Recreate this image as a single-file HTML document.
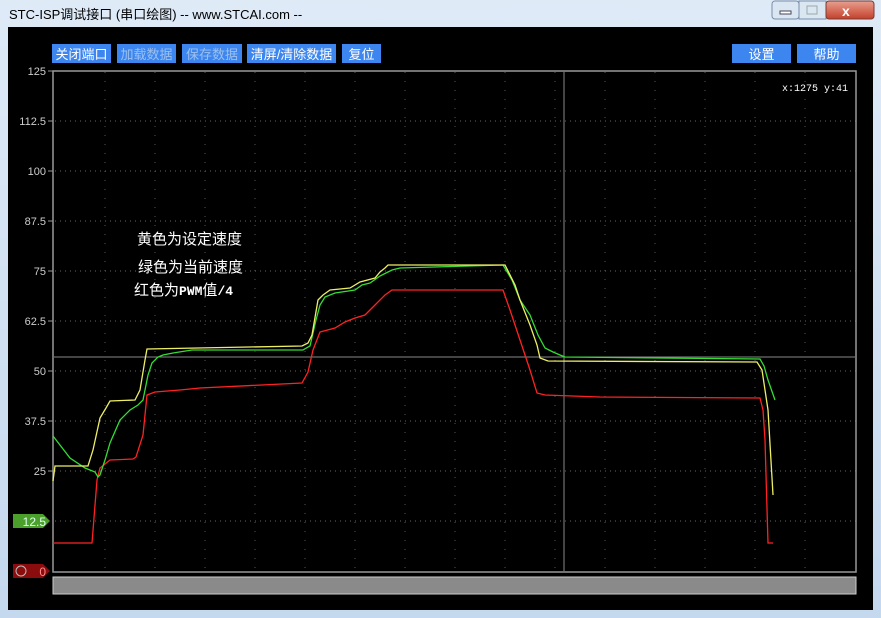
<!DOCTYPE html>
<html><head><meta charset="utf-8"><style>
body{margin:0;width:881px;height:618px;overflow:hidden;background:#c9dcf0;font-family:"Liberation Sans","Noto Sans CJK SC",sans-serif}
</style></head><body>
<svg width="881" height="618" xmlns="http://www.w3.org/2000/svg" style="position:absolute;left:0;top:0">
<defs><linearGradient id="tb" x1="0" y1="0" x2="0" y2="1"><stop offset="0" stop-color="#dfeaf7"/><stop offset="1" stop-color="#c4d8ee"/></linearGradient>
<linearGradient id="cl" x1="0" y1="0" x2="0" y2="1"><stop offset="0" stop-color="#e8a090"/><stop offset="1" stop-color="#c4402a"/></linearGradient></defs>
<rect width="881" height="618" fill="url(#tb)"/>
<text x="9" y="19" font-size="13" fill="#000" font-family="Liberation Sans,Noto Sans CJK SC,sans-serif">STC-ISP调试接口 (串口绘图) -- www.STCAI.com --</text>
<rect x="772" y="1" width="27" height="18" rx="3" fill="#dbe6f3" stroke="#7a8ea8"/>
<rect x="780" y="11" width="11" height="3" fill="#fff" stroke="#445"/>
<rect x="799" y="1" width="27" height="18" fill="#dbe6f3" stroke="#7a8ea8"/>
<rect x="807" y="6" width="10" height="8" fill="none" stroke="#9aa"/>
<rect x="826" y="1" width="48" height="18" rx="3" fill="url(#cl)" stroke="#7a3a30"/>
<text x="842" y="16" font-size="14" font-weight="bold" fill="#fff">x</text>
<rect x="8" y="27" width="865" height="583" fill="#000"/>
<g stroke="#666" stroke-dasharray="1,4">
<line x1="55" y1="121" x2="856" y2="121"/><line x1="55" y1="171" x2="856" y2="171"/><line x1="55" y1="221" x2="856" y2="221"/><line x1="55" y1="271" x2="856" y2="271"/><line x1="55" y1="321" x2="856" y2="321"/><line x1="55" y1="371" x2="856" y2="371"/><line x1="55" y1="421" x2="856" y2="421"/><line x1="55" y1="471" x2="856" y2="471"/><line x1="55" y1="521" x2="856" y2="521"/>
</g>
<g stroke="#555" stroke-dasharray="1,8">
<line x1="105" y1="72" x2="105" y2="570"/><line x1="155" y1="72" x2="155" y2="570"/><line x1="205" y1="72" x2="205" y2="570"/><line x1="255" y1="72" x2="255" y2="570"/><line x1="305" y1="72" x2="305" y2="570"/><line x1="355" y1="72" x2="355" y2="570"/><line x1="405" y1="72" x2="405" y2="570"/><line x1="455" y1="72" x2="455" y2="570"/><line x1="505" y1="72" x2="505" y2="570"/><line x1="555" y1="72" x2="555" y2="570"/><line x1="605" y1="72" x2="605" y2="570"/><line x1="655" y1="72" x2="655" y2="570"/><line x1="705" y1="72" x2="705" y2="570"/><line x1="755" y1="72" x2="755" y2="570"/><line x1="805" y1="72" x2="805" y2="570"/>
</g>
<rect x="53" y="71" width="803" height="501" fill="none" stroke="#999" stroke-width="1.5"/>
<g fill="#ccc" font-size="11" text-anchor="end">
<text x="46" y="75">125</text><text x="46" y="125">112.5</text><text x="46" y="175">100</text><text x="46" y="225">87.5</text><text x="46" y="275">75</text><text x="46" y="325">62.5</text><text x="46" y="375">50</text><text x="46" y="425">37.5</text><text x="46" y="475">25</text>
</g>
<g stroke="#999"><line x1="48" y1="71" x2="53" y2="71"/><line x1="48" y1="121" x2="53" y2="121"/><line x1="48" y1="171" x2="53" y2="171"/><line x1="48" y1="221" x2="53" y2="221"/><line x1="48" y1="271" x2="53" y2="271"/><line x1="48" y1="321" x2="53" y2="321"/><line x1="48" y1="371" x2="53" y2="371"/><line x1="48" y1="421" x2="53" y2="421"/><line x1="48" y1="471" x2="53" y2="471"/></g>
<path d="M13 514 H43 L50 521 L43 528 H13 Z" fill="#4aa02a"/>
<text x="46" y="526" font-size="12" fill="#dfe" text-anchor="end">12.5</text>
<path d="M13 564 H43 L50 571 L43 578 H13 Z" fill="#8a0c0c"/>
<circle cx="21" cy="571" r="5" fill="none" stroke="#bbb"/>
<text x="46" y="576" font-size="12" fill="#f88" text-anchor="end">0</text>
<line x1="564" y1="72" x2="564" y2="571" stroke="#888"/>
<line x1="54" y1="357" x2="855" y2="357" stroke="#888"/>
<text x="815" y="91" font-size="10" fill="#fff" font-family="Liberation Mono,monospace" text-anchor="middle">x:1275 y:41</text>
<polyline fill="none" stroke="#f22" stroke-width="1.3" points="53,543 92,543 97,480 100,468 110,460 133,459 136,457 143,435 147,395 155,392 180,390 200,388 302,383 308,372 313,350 320,332 335,328 345,322 355,318 365,315 375,305 385,295 392,290 503,290 510,310 520,340 530,370 537,393 545,395 600,397 760,398 763,410 765,440 768,543 773,543"/>
<polyline fill="none" stroke="#3d3" stroke-width="1.3" points="53,436 70,458 85,468 95,472 98,477 100,475 105,460 110,443 120,420 130,410 138,405 143,400 148,375 152,363 158,357 163,355 173,353 192,350 303,350 310,346 316,320 320,305 325,297 335,293 355,290 362,285 370,283 380,276 392,270 400,268 503,265 512,280 520,300 530,315 538,335 545,348 553,352 560,355 565,357 760,359 764,366 768,380 775,400"/>
<polyline fill="none" stroke="#ee6" stroke-width="1.3" points="53,481 55,466 88,466 93,450 100,418 106,408 110,401 135,400 140,390 145,360 147,349 302,346 308,343 312,335 318,300 323,295 330,290 350,288 360,282 375,278 380,272 385,268 388,265 505,265 515,285 520,300 530,325 537,345 540,358 548,361 757,362 762,370 768,410 773,495"/>
<g fill="#fff" font-size="15">
<text x="137" y="244">黄色为设定速度</text><text x="138" y="272">绿色为当前速度</text><text x="134" y="295">红色为<tspan font-weight="bold" font-family="Liberation Mono,monospace" font-size="13">PWM</tspan>值<tspan font-weight="bold" font-family="Liberation Mono,monospace" font-size="13">/4</tspan></text>
</g>
<rect x="53" y="577" width="803" height="17" fill="#8a8a8a" stroke="#ccc"/>
<g font-size="13" text-anchor="middle">
<rect x="52" y="44" width="59" height="19" fill="#3d86ef"/><text x="81.5" y="59" fill="#fff">关闭端口</text>
<rect x="117" y="44" width="59" height="19" fill="#3d86ef"/><text x="146.5" y="59" fill="#9cc0ef">加载数据</text>
<rect x="182" y="44" width="60" height="19" fill="#3d86ef"/><text x="212" y="59" fill="#9cc0ef">保存数据</text>
<rect x="247" y="44" width="89" height="19" fill="#3d86ef"/><text x="291.5" y="59" fill="#fff">清屏/清除数据</text>
<rect x="342" y="44" width="39" height="19" fill="#3d86ef"/><text x="361.5" y="59" fill="#fff">复位</text>
<rect x="732" y="44" width="59" height="19" fill="#3d86ef"/><text x="761.5" y="59" fill="#fff">设置</text>
<rect x="797" y="44" width="59" height="19" fill="#3d86ef"/><text x="826.5" y="59" fill="#fff">帮助</text>
</g>
</svg>
</body></html>
